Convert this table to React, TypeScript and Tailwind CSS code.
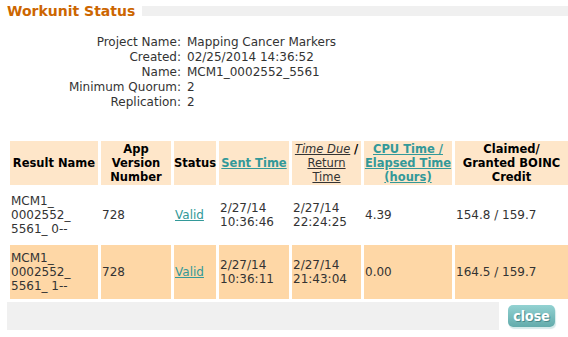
import React from 'react';

const FONT = "font-['DejaVu_Sans',Verdana,sans-serif]";
const LINK = "text-[#339999] underline";

const info = [
    ['Project Name:', 'Mapping Cancer Markers'],
    ['Created:', '02/25/2014 14:36:52'],
    ['Name:', 'MCM1_0002552_5561'],
    ['Minimum Quorum:', '2'],
    ['Replication:', '2'],
];

const results = [
    { name: ['MCM1_', '0002552_', '5561_ 0--'], version: '728', sent: ['2/27/14', '10:36:46'], due: ['2/27/14', '22:24:25'], cpu: '4.39', credit: '154.8 / 159.7', bg: 'bg-white' },
    { name: ['MCM1_', '0002552_', '5561_ 1--'], version: '728', sent: ['2/27/14', '10:36:11'], due: ['2/27/14', '21:43:04'], cpu: '0.00', credit: '164.5 / 159.7', bg: 'bg-[#fed7a6]' },
];

const Lines: React.FC<{ lines: string[] }> = ({ lines }) => (
    <>
        {lines.map((l, i) => (
            <div key={i}>{l}</div>
        ))}
    </>
);

export default function App() {
    const th = "bg-[#fee6c9] font-bold text-black text-center align-middle p-0 text-[11.5px] leading-[14px] whitespace-nowrap";
    const td = "align-middle px-[1px] py-[6px]";

    return (
        <div className={`w-[568px] h-[337px] overflow-hidden bg-white text-[#333] ${FONT}`}>
            {/* title */}
            <div className="flex items-center pl-[7px] pt-[2px] h-[20px]">
                <h1 className="text-[14px] leading-[18px] font-bold text-[#cc6600] whitespace-nowrap">Workunit Status</h1>
                <div className="flex-1 h-[10px] bg-[#f0f0f0] ml-[7px]" />
            </div>

            {/* workunit info */}
            <div className="grid grid-cols-[181px_1fr] mt-[15px] text-[12px] leading-[15px]">
                {info.map(([k, v]) => (
                    <React.Fragment key={k}>
                        <div className="text-right">{k}</div>
                        <div className="pl-[6px]">{v}</div>
                    </React.Fragment>
                ))}
            </div>

            {/* results */}
            <table className="ml-[7px] mt-[28px] w-[564px] border-separate border-spacing-[3px] text-[12px] leading-[14px] table-fixed">
                <colgroup>
                    <col className="w-[88px]" />
                    <col className="w-[70px]" />
                    <col className="w-[42px]" />
                    <col className="w-[70px]" />
                    <col className="w-[69px]" />
                    <col className="w-[88px]" />
                    <col className="w-[113px]" />
                </colgroup>
                <thead>
                    <tr>
                        <th className={`${th} h-[44px]`}>Result Name</th>
                        <th className={th}>App<br />Version<br />Number</th>
                        <th className={th}>Status</th>
                        <th className={th}><a className={LINK}>Sent Time</a></th>
                        <th className={`${th} font-normal`}>
                            <a className="underline italic text-[#333]">Time Due</a> <b className="text-black">/</b>
                            <br />
                            <a className="underline text-[#333]">Return<br />Time</a>
                        </th>
                        <th className={th}><a className={LINK}>CPU Time /<br />Elapsed Time<br />(hours)</a></th>
                        <th className={th}>Claimed/<br />Granted BOINC<br />Credit</th>
                    </tr>
                </thead>
                <tbody>
                    {results.map((r, i) => (
                        <tr key={i} className={r.bg}>
                            <td className={td}><Lines lines={r.name} /></td>
                            <td className={td}>{r.version}</td>
                            <td className={td}><a className={LINK}>Valid</a></td>
                            <td className={td}><Lines lines={r.sent} /></td>
                            <td className={td}><Lines lines={r.due} /></td>
                            <td className={td}>{r.cpu}</td>
                            <td className={td}>{r.credit}</td>
                        </tr>
                    ))}
                </tbody>
            </table>

            {/* footer */}
            <div className="flex items-center pl-[7px]">
                <div className="w-[492px] h-[28px] bg-[#f0f0f0]" />
                <button className="ml-[9px] w-[47px] h-[22px] rounded-[5px] bg-gradient-to-b from-[#93d2d2] to-[#62abab] shadow-[1px_2px_1px_#d5eaea] text-white font-bold text-[14px] leading-[22px] font-['DejaVu_Sans_Condensed',sans-serif] [text-shadow:1px_1px_0_#4a8a8a]">
                    close
                </button>
            </div>
        </div>
    );
}
